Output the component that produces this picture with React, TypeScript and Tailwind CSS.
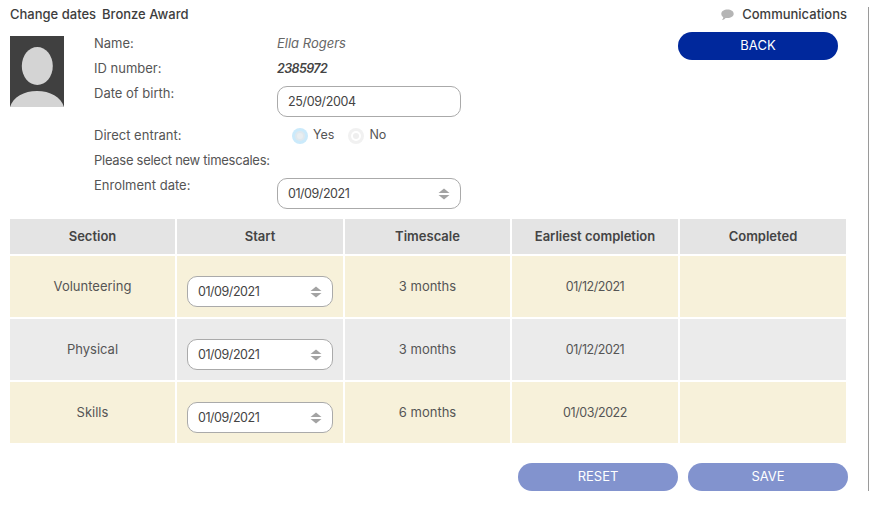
import React from "react";

const rows = [
  { section: "Volunteering", start: "01/09/2021", timescale: "3 months", earliest: "01/12/2021", bg: "bg-[#f7f1da]" },
  { section: "Physical", start: "01/09/2021", timescale: "3 months", earliest: "01/12/2021", bg: "bg-[#ebebeb]" },
  { section: "Skills", start: "01/09/2021", timescale: "6 months", earliest: "01/03/2022", bg: "bg-[#f7f1da]" },
];

const headers = ["Section", "Start", "Timescale", "Earliest completion", "Completed"];

const Avatar = () => (
  <svg width="54" height="71" viewBox="0 0 54 71" className="block">
    <rect width="54" height="71" fill="#404040" />
    <ellipse cx="27.3" cy="30" rx="15.5" ry="19" fill="#d4d4d4" />
    <path d="M0 71 C3 61 14 55 27 55 C40 55 51 61 54 71 Z" fill="#d4d4d4" />
  </svg>
);

const DateSelect: React.FC<{ value: string; className?: string }> = ({ value, className }) => (
  <div
    className={`flex h-[31px] items-center justify-between rounded-[10px] border border-[#aaaaaa] bg-white pl-[10px] pr-[10px] text-[12.5px] tracking-[-0.45px] text-[#444444] ${className ?? ""}`}
  >
    <span className="mt-[2px]">{value}</span>
    <svg width="12" height="12" viewBox="0 0 12 12">
      <path d="M6 0.5 L11.5 5 H0.5 Z" fill="#a3a3a3" />
      <path d="M6 11.5 L11.5 7 H0.5 Z" fill="#a3a3a3" />
    </svg>
  </div>
);

const Radio: React.FC<{ checked?: boolean }> = ({ checked }) => (
  <span
    className={`flex h-4 w-4 items-center justify-center rounded-full ${checked ? "bg-[#cbeafb]" : "bg-[#f1f1f1]"}`}
  >
    <span
      className={`flex h-[10px] w-[10px] items-center justify-center rounded-full ${checked ? "bg-[#dfe8ee]" : "bg-white"}`}
    >
      <span className={`h-[6px] w-[6px] rounded-full ${checked ? "bg-[#e9eef1]" : "bg-[#efefef]"}`} />
    </span>
  </span>
);

const FormRow: React.FC<{ label: string; labelClass?: string; children?: React.ReactNode }> = ({
  label,
  labelClass,
  children,
}) => (
  <div className="flex">
    <div className={`h-[25px] w-[183px] shrink-0 whitespace-nowrap leading-[25px] ${labelClass ?? ""}`}>{label}</div>
    {children}
  </div>
);

export default function App() {
  return (
    <div className="h-[516px] w-[890px] bg-white pt-[7px] font-['Inter','Liberation_Sans',sans-serif] text-[13px] text-[#555555]">
      <div className="h-[484px] w-[869px] border-r border-[#9a9a9a]">
        <div className="flex h-[24px] justify-between pl-[10px] pr-[21px]">
          <div className="flex gap-[6px] font-medium leading-[15px] text-[#3d3d3d]">
            <span>Change dates</span>
            <span>Bronze Award</span>
          </div>
          <div className="flex items-start gap-[8px] font-medium leading-[15px] text-[#3d3d3d]">
            <svg width="13" height="12" viewBox="0 0 13 12" className="mt-[2px]">
              <path
                d="M6.5 0.5 C10 0.5 12.7 2.3 12.7 4.8 C12.7 7.3 10 9.1 6.5 9.1 C5.8 9.1 5.2 9 4.6 8.9 C3.8 10 2.4 10.8 0.9 11 C1.7 10.2 2.2 9.3 2.3 8.3 C1 7.5 0.3 6.2 0.3 4.8 C0.3 2.3 3 0.5 6.5 0.5 Z"
                fill="#b5b5b5"
              />
            </svg>
            <span>Communications</span>
          </div>
        </div>

        <div className="flex pl-[10px]">
          <div className="mt-[5px] w-[84px] shrink-0">
            <Avatar />
          </div>
          <div className="w-[584px] shrink-0">
            <FormRow label="Name:">
              <span className="italic leading-[25px] text-[#666666]">Ella Rogers</span>
            </FormRow>
            <FormRow label="ID number:">
              <span className="h-[25px] text-[12.5px] font-semibold italic leading-[25px] tracking-[-0.6px] text-[#444444]">
                2385972
              </span>
            </FormRow>
            <FormRow label="Date of birth:">
              <input
                readOnly
                value="25/09/2004"
                className="mb-[6px] mt-[5px] h-[31px] w-[184px] rounded-[10px] border border-[#aaaaaa] bg-white pl-[10px] text-[12.5px] tracking-[-0.35px] text-[#444444] outline-none"
              />
            </FormRow>
            <FormRow label="Direct entrant:">
              <div className="ml-[15px] flex items-center">
                <Radio checked />
                <span className="mb-[1px] ml-[5px] mr-[14px] text-[12.5px]">Yes</span>
                <Radio />
                <span className="mb-[1px] ml-[5px] text-[12.5px]">No</span>
              </div>
            </FormRow>
            <FormRow label="Please select new timescales:" labelClass="tracking-[-0.28px]" />
            <FormRow label="Enrolment date:">
              <DateSelect value="01/09/2021" className="mb-[10px] mt-[5px] w-[184px]" />
            </FormRow>
          </div>
          <div className="w-[160px] shrink-0">
            <button className="mt-[1px] h-[28px] w-[160px] rounded-full bg-[#00289c] text-white">BACK</button>
          </div>
        </div>

        <div className="ml-[10px] grid w-[836px] grid-cols-[165px_166px_165px_166px_166px] gap-[2px] text-center">
          {headers.map((h) => (
            <div key={h} className="flex h-[35px] items-center justify-center bg-[#e4e4e4] font-semibold text-[#444444]">
              {h}
            </div>
          ))}
          {rows.map((r) => (
            <React.Fragment key={r.section}>
              <div className={`flex h-[61px] items-center justify-center ${r.bg}`}>{r.section}</div>
              <div className={`h-[61px] px-[10px] pt-[20px] text-left ${r.bg}`}>
                <DateSelect value={r.start} className="w-[146px]" />
              </div>
              <div className={`flex h-[61px] items-center justify-center ${r.bg}`}>{r.timescale}</div>
              <div className={`flex h-[61px] items-center justify-center pt-[2px] text-[12.5px] tracking-[-0.45px] ${r.bg}`}>
                {r.earliest}
              </div>
              <div className={`h-[61px] ${r.bg}`} />
            </React.Fragment>
          ))}
        </div>

        <div className="ml-[518px] mt-[20px] flex w-[330px] gap-[10px]">
          <button className="h-[28px] w-[160px] rounded-full bg-[#8293ce] text-white">RESET</button>
          <button className="h-[28px] w-[160px] rounded-full bg-[#8293ce] text-white">SAVE</button>
        </div>
      </div>
    </div>
  );
}
